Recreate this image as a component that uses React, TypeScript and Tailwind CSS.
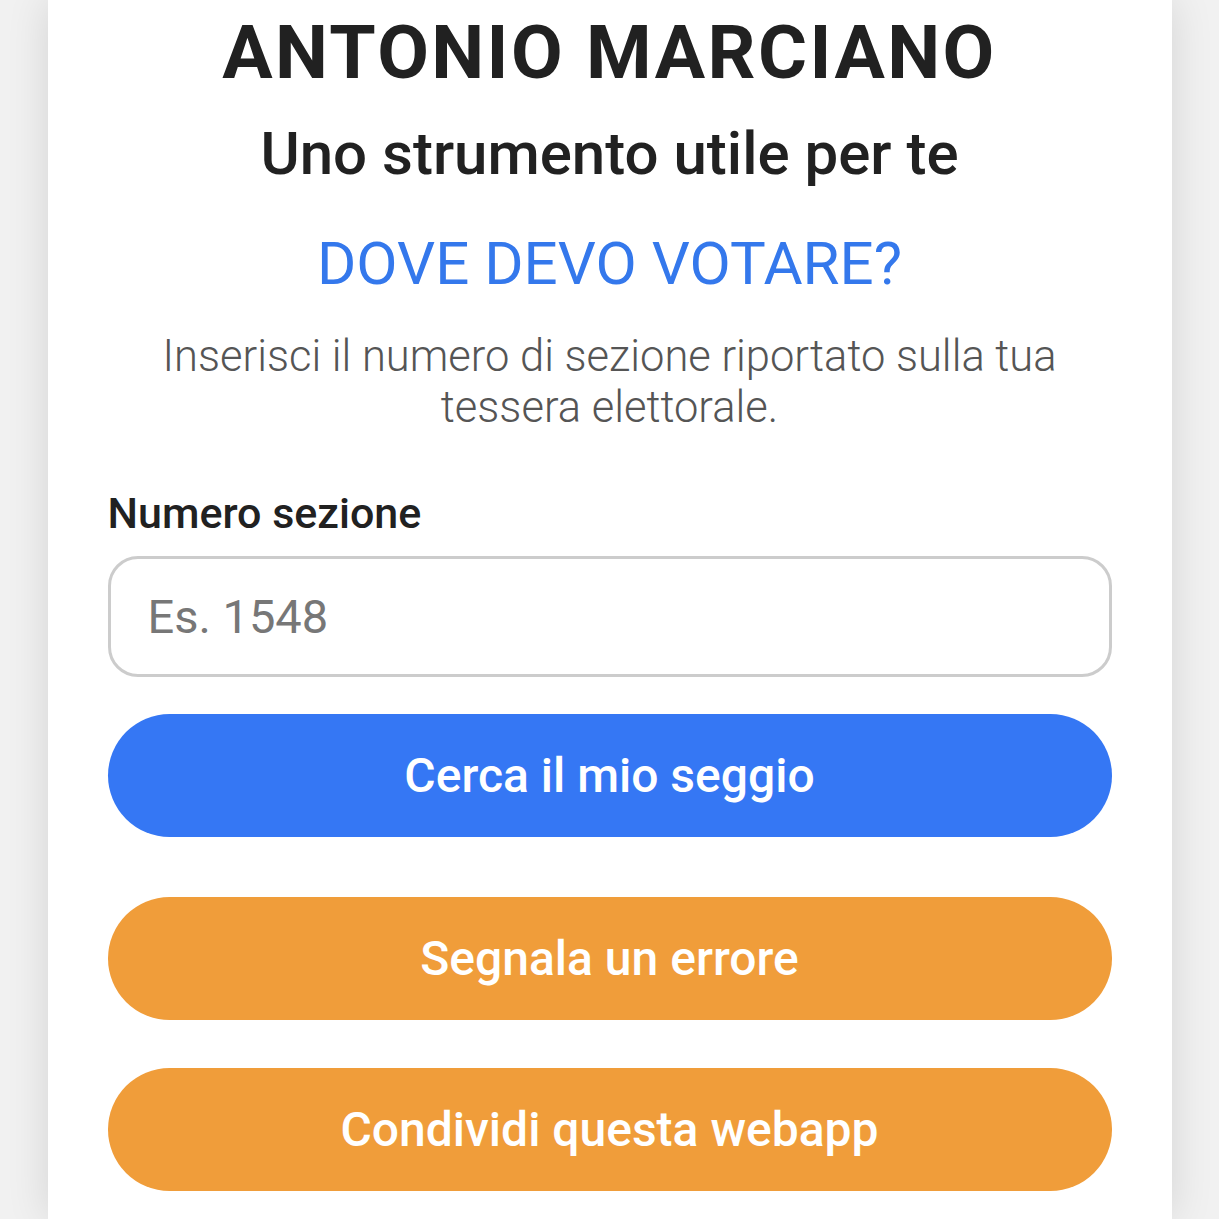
import React from 'react';

export default function App() {
    return (
        <div className="min-h-screen bg-[#f1f1f1]" style={{ fontFamily: 'Roboto, "Noto Sans", sans-serif' }}>
            <div className="mx-auto w-[1124px] min-h-[1219px] bg-white px-[60px] pt-[7px] shadow-[0_0_40px_rgba(0,0,0,0.12)]">
                <h1 className="text-center text-[75px] leading-[90px] font-bold tracking-[2.4px] text-[#212121]">
                    ANTONIO MARCIANO
                </h1>
                <h2 className="mt-[22px] text-center text-[60px] leading-[70px] font-medium text-[#212121]">
                    Uno strumento utile per te
                </h2>
                <h3 className="mt-[40px] text-center text-[60px] leading-[70px] font-normal text-[#3478ec]">
                    DOVE DEVO VOTARE?
                </h3>
                <p className="mt-[32px] text-center text-[43.5px] leading-[51px] font-light text-[#555555]">
                    Inserisci il numero di sezione riportato sulla tua tessera elettorale.
                </p>
                <label className="mt-[55px] block text-[43px] leading-[50px] font-medium text-[#212121]">
                    Numero sezione
                </label>
                <input
                    type="text"
                    placeholder="Es. 1548"
                    className="mt-[18px] block h-[121px] w-full rounded-[30px] border-[3px] border-[#cccccc] px-[37px] text-[47px] text-[#212121] placeholder-[#777777] outline-none"
                />
                <button className="mt-[37px] block h-[123px] w-full rounded-full bg-[#3577f4] text-[48px] font-medium text-white">
                    Cerca il mio seggio
                </button>
                <button className="mt-[60px] block h-[123px] w-full rounded-full bg-[#f09d3a] text-[48px] font-medium text-white">
                    Segnala un errore
                </button>
                <button className="mt-[48px] block h-[123px] w-full rounded-full bg-[#f09d3a] text-[48px] font-medium text-white">
                    Condividi questa webapp
                </button>
            </div>
        </div>
    );
}
